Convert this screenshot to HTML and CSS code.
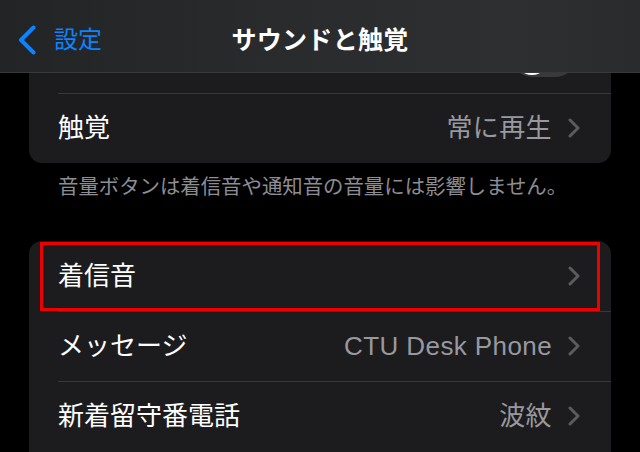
FILE: index.html
```html
<!DOCTYPE html>
<html lang="ja">
<head>
<meta charset="utf-8">
<title>サウンドと触覚</title>
<link rel="stylesheet" href="styles.css">
</head>
<body>
<div class="screen">
  <main class="content">
    <section class="group">
      <div class="row">
        <span class="label"></span>
        <span class="switch"><span class="knob"></span></span>
      </div>
      <div class="row">
        <span class="label">触覚</span>
        <span class="value">常に再生</span>
        <svg class="chev" viewBox="0 0 12 20" width="12" height="20"><path d="M2 2 L10 10 L2 18"/></svg>
      </div>
    </section>
    <p class="footer">音量ボタンは着信音や通知音の音量には影響しません。</p>
    <section class="group group-open">
      <div class="row row-marked">
        <span class="label">着信音</span>
        <span class="value"></span>
        <svg class="chev" viewBox="0 0 12 20" width="12" height="20"><path d="M2 2 L10 10 L2 18"/></svg>
        <span class="mark"></span>
      </div>
      <div class="row">
        <span class="label">メッセージ</span>
        <span class="value">CTU Desk Phone</span>
        <svg class="chev" viewBox="0 0 12 20" width="12" height="20"><path d="M2 2 L10 10 L2 18"/></svg>
      </div>
      <div class="row">
        <span class="label">新着留守番電話</span>
        <span class="value">波紋</span>
        <svg class="chev" viewBox="0 0 12 20" width="12" height="20"><path d="M2 2 L10 10 L2 18"/></svg>
      </div>
    </section>
  </main>
  <header class="nav">
    <a class="back" href="#">
      <svg class="back-chev" viewBox="0 0 20 30" width="20" height="30"><path d="M16.5 2.5 L4 15 L16.5 27.5"/></svg>
      <span>設定</span>
    </a>
    <h1 class="title">サウンドと触覚</h1>
    <span class="nav-spacer"></span>
  </header>
</div>
</body>
</html>
```

FILE: styles.css
```css
html, body {
  margin: 0;
  padding: 0;
  background: #000;
}

body {
  font-family: "Liberation Sans", "Noto Sans CJK JP", sans-serif;
  color: #fff;
}

.screen {
  position: relative;
  width: 640px;
  height: 452px;
  overflow: hidden;
  background: #000;
}

/* navigation bar (overlays scrolled content) */
.nav {
  position: absolute;
  top: 0;
  left: 0;
  right: 0;
  height: 73px;
  box-sizing: border-box;
  padding-top: 8px;
  display: grid;
  grid-template-columns: 1fr auto 1fr;
  align-items: center;
  background: linear-gradient(90deg, #222426 0%, #2a2b2d 45%, #2e2f31 80%, #2a2b2d 100%);
  border-bottom: 1px solid #38393b;
  z-index: 2;
}

.back {
  display: flex;
  align-items: center;
  gap: 17px;
  padding-left: 17px;
  color: #0a84ff;
  text-decoration: none;
  font-size: 24px;
  line-height: 30px;
}

.back-chev {
  display: block;
  fill: none;
  stroke: #0a84ff;
  stroke-width: 4;
  stroke-linecap: round;
  stroke-linejoin: round;
}

.title {
  margin: 0;
  font-size: 25px;
  font-weight: 700;
  line-height: 30px;
  color: #fff;
  letter-spacing: 0.3px;
}

/* scrolled content */
.content {
  padding: 23px 29px 0 29px;
}

.group {
  background: #1c1c1e;
  border-radius: 13px;
  overflow: hidden;
}

.group-open {
  border-bottom-left-radius: 0;
  border-bottom-right-radius: 0;
  padding-bottom: 30px;
}

.row {
  position: relative;
  height: 70px;
  box-sizing: border-box;
  display: flex;
  align-items: center;
  padding: 0 31px 0 29px;
}

.row + .row::before {
  content: "";
  position: absolute;
  top: 0;
  left: 29px;
  right: 0;
  height: 1px;
  background: #38383a;
}

.label {
  flex: 1;
  font-size: 26px;
  line-height: 30px;
  color: #fff;
  white-space: nowrap;
}

.value {
  font-size: 26px;
  line-height: 30px;
  letter-spacing: 0.4px;
  color: #98989e;
  margin-right: 16px;
  white-space: nowrap;
}

.chev {
  display: block;
  flex: none;
  fill: none;
  stroke: #5b5b60;
  stroke-width: 3;
  stroke-linecap: round;
  stroke-linejoin: round;
}

.switch {
  position: relative;
  width: 62px;
  height: 38px;
  border-radius: 19px;
  background: #39393d;
  margin-right: 5px;
  flex: none;
}

.knob {
  position: absolute;
  top: 2px;
  left: 2px;
  width: 34px;
  height: 34px;
  border-radius: 50%;
  background: #fff;
}

.footer {
  margin: 0 0 42px 0;
  padding: 12px 0 0 29px;
  font-size: 20.4px;
  line-height: 24px;
  color: #8d8d93;
}

/* red annotation frame */
.mark {
  position: absolute;
  top: 1px;
  bottom: 0;
  left: 11px;
  right: 11px;
  border: 3px solid #ee0000;
  pointer-events: none;
}
```
